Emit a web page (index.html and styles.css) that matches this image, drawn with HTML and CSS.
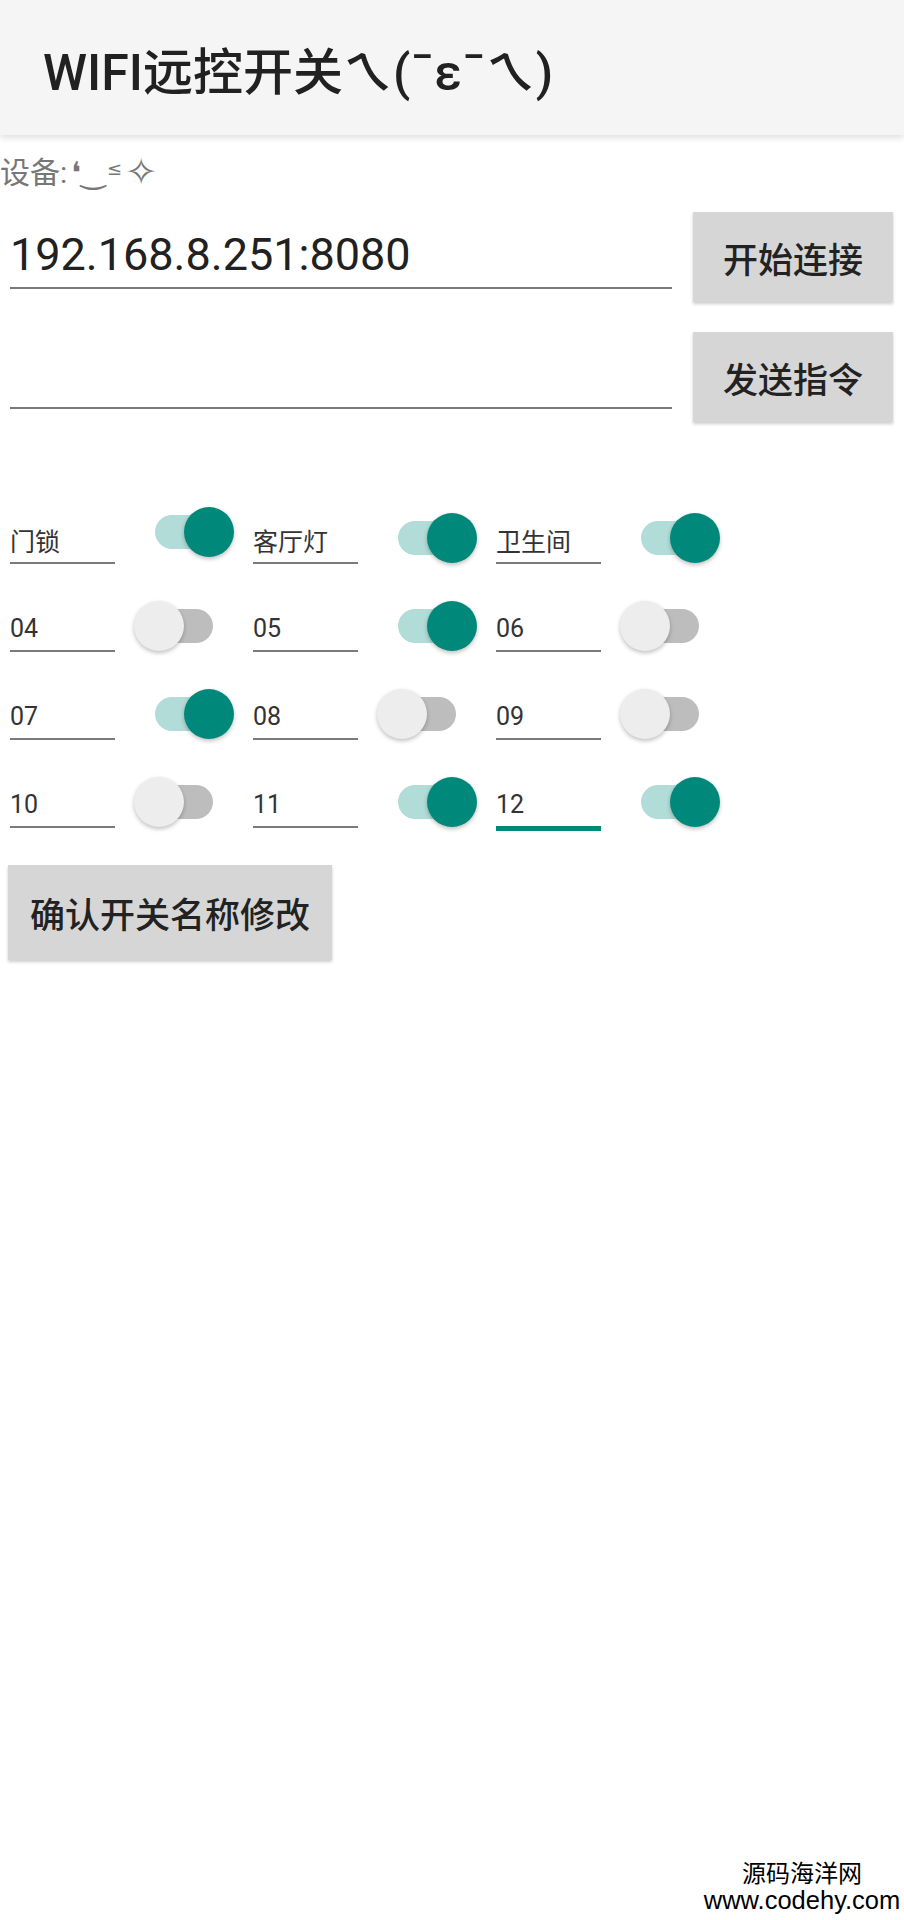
FILE: index.html
```html
<!DOCTYPE html>
<html lang="zh-CN">
<head>
    <meta charset="UTF-8">
    <meta name="viewport" content="width=device-width, initial-scale=1.0">
    <title>WIFI远控开关</title>
    <link rel="stylesheet" href="styles.css">
</head>
<body>
    <div class="screen">
        <header class="toolbar">
            <h1 class="title">WIFI远控开关ㄟ(¯ε¯ㄟ)</h1>
        </header>

        <main class="content">
            <p class="device">设备:<span class="kao">❛‿<span class="lt">≤</span><span class="star">✧</span></span></p>

            <div class="cmd-row">
                <input class="cmd-input" type="text" value="192.168.8.251:8080">
                <button class="btn">开始连接</button>
            </div>
            <div class="cmd-row second">
                <input class="cmd-input" type="text" value="">
                <button class="btn">发送指令</button>
            </div>

            <div class="switches">
                <div class="sw-row">
                    <input class="name" value="门锁">
                    <div class="switch on raised"><span class="track"></span><span class="thumb"></span></div>
                    <input class="name" value="客厅灯">
                    <div class="switch on"><span class="track"></span><span class="thumb"></span></div>
                    <input class="name" value="卫生间">
                    <div class="switch on"><span class="track"></span><span class="thumb"></span></div>
                </div>
                <div class="sw-row">
                    <input class="name" value="04">
                    <div class="switch"><span class="track"></span><span class="thumb"></span></div>
                    <input class="name" value="05">
                    <div class="switch on"><span class="track"></span><span class="thumb"></span></div>
                    <input class="name" value="06">
                    <div class="switch"><span class="track"></span><span class="thumb"></span></div>
                </div>
                <div class="sw-row">
                    <input class="name" value="07">
                    <div class="switch on"><span class="track"></span><span class="thumb"></span></div>
                    <input class="name" value="08">
                    <div class="switch"><span class="track"></span><span class="thumb"></span></div>
                    <input class="name" value="09">
                    <div class="switch"><span class="track"></span><span class="thumb"></span></div>
                </div>
                <div class="sw-row">
                    <input class="name" value="10">
                    <div class="switch"><span class="track"></span><span class="thumb"></span></div>
                    <input class="name" value="11">
                    <div class="switch on"><span class="track"></span><span class="thumb"></span></div>
                    <input class="name focused" value="12">
                    <div class="switch on"><span class="track"></span><span class="thumb"></span></div>
                </div>
            </div>

            <button class="btn btn-confirm">确认开关名称修改</button>
        </main>

        <footer class="watermark">
            <div class="wm-name">源码海洋网</div>
            <div class="wm-url">www.codehy.com</div>
        </footer>
    </div>
</body>
</html>
```

FILE: styles.css
```css
body {
    margin: 0;
    font-family: Roboto, 'Noto Sans CJK SC', sans-serif;
    background: #fff;
    color: #212121;
}
.screen {
    min-height: 1920px;
    display: flex;
    flex-direction: column;
}
.toolbar {
    height: 135px;
    background: #f5f5f5;
    box-shadow: 0 3px 6px rgba(0,0,0,0.12);
    display: flex;
    align-items: center;
    padding-left: 43px;
}
.title {
    margin: 0;
    font-size: 50px;
    font-weight: 500;
    color: #212121;
}
.content {
    display: flex;
    flex-direction: column;
}
.device {
    height: 40px;
    margin: 18px 0 0;
    font-size: 30px;
    line-height: 40px;
    color: #777;
}
.kao {
    font-family: 'DejaVu Sans', sans-serif;
    font-size: 30px;
    line-height: 0;
    margin-left: 4px;
}
.kao .lt {
    font-size: 18px;
    vertical-align: 8px;
    margin: 0 3px 0 2px;
}
.kao .star {
    font-size: 38px;
    vertical-align: -2px;
}
.cmd-row {
    display: flex;
    align-items: flex-start;
    margin-top: 19px;
    padding-left: 10px;
}
.cmd-row.second {
    margin-top: 30px;
}
.cmd-input {
    box-sizing: content-box;
    width: 662px;
    height: 56px;
    margin: 14px 21px 0 0;
    padding: 0 0 5px;
    border: none;
    border-bottom: 2px solid #7a7a7a;
    background: transparent;
    outline: none;
    font-family: Roboto, 'Noto Sans CJK SC', sans-serif;
    font-size: 45px;
    color: #212121;
}
.btn {
    width: 200px;
    height: 90px;
    padding: 0;
    border: none;
    background: #d6d6d6;
    box-shadow: 0 2px 3px rgba(0,0,0,0.2);
    font-family: Roboto, 'Noto Sans CJK SC', sans-serif;
    font-size: 35px;
    font-weight: 500;
    color: #222;
}
.switches {
    margin-top: 54px;
}
.sw-row {
    display: flex;
    align-items: flex-end;
    height: 88px;
    padding-left: 10px;
}
.name {
    box-sizing: content-box;
    width: 105px;
    height: 30px;
    margin-right: 19px;
    padding: 0 0 7px;
    border: none;
    border-bottom: 2px solid #7a7a7a;
    background: transparent;
    outline: none;
    font-family: Roboto, 'Noto Sans CJK SC', sans-serif;
    font-size: 25px;
    color: #333;
}
.name.focused {
    border-bottom: 5px solid #00897b;
    margin-bottom: -3px;
}
.switch {
    position: relative;
    width: 100px;
    height: 50px;
    margin: 0 19px 1px 0;
}
.switch.raised {
    margin-bottom: 7px;
}
.track {
    position: absolute;
    left: 21px;
    top: 8px;
    width: 58px;
    height: 34px;
    border-radius: 17px;
    background: #bdbdbd;
}
.thumb {
    position: absolute;
    left: 0;
    top: 0;
    width: 50px;
    height: 50px;
    border-radius: 50%;
    background: #ededed;
    box-shadow: 0 2px 4px rgba(0,0,0,0.25);
}
.switch.on .track {
    background: #b2dcd7;
}
.switch.on .thumb {
    left: 50px;
    background: #00897b;
}
.btn-confirm {
    width: 324px;
    height: 95px;
    margin: 37px 0 0 8px;
}
.watermark {
    margin-top: auto;
    align-self: flex-end;
    width: 204px;
    padding-bottom: 6px;
    text-align: center;
    color: #000;
}
.wm-name {
    font-family: 'Noto Sans CJK SC', sans-serif;
    font-size: 24px;
    line-height: 28px;
}
.wm-url {
    font-family: 'Liberation Sans', sans-serif;
    font-size: 25.5px;
    line-height: 28px;
}
```
